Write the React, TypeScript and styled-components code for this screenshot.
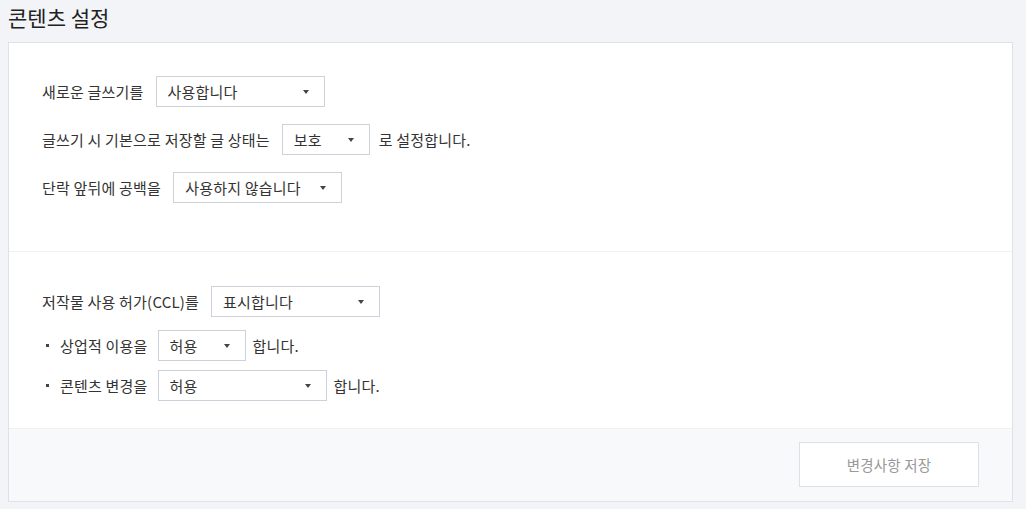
import React from "react";
import styled, { createGlobalStyle } from "styled-components";

const GlobalStyle = createGlobalStyle`
  html, body {
    margin: 0;
    padding: 0;
    background: #f3f4f7;
  }
  body {
    font-family: "Noto Sans CJK KR", "Noto Sans", sans-serif;
    color: #333;
    font-size: 15px;
    letter-spacing: 0.2px;
  }
`;

const Page = styled.div`
  padding: 0 13px 0 8px;
`;

const Title = styled.h2`
  margin: 0;
  height: 42px;
  font-size: 21px;
  font-weight: 400;
  line-height: 34px;
  letter-spacing: 0;
  color: #222;
`;

const Card = styled.div`
  background: #fff;
  border: 1px solid #dfe1ea;
  display: flex;
  flex-direction: column;
`;

const Section = styled.div<{ $top: number; $bottom: number }>`
  display: flex;
  flex-direction: column;
  padding: ${(p) => p.$top}px 33px ${(p) => p.$bottom}px 33px;
  & + & {
    border-top: 1px solid #eef0f3;
  }
`;

const Row = styled.div<{ $gap?: number }>`
  display: flex;
  align-items: center;
  height: 31px;
  gap: 12px;
  & + & {
    margin-top: ${(p) => p.$gap ?? 17}px;
  }
`;

const List = styled.ul`
  list-style: none;
  margin: 13px 0 0;
  padding: 0;
  display: flex;
  flex-direction: column;
  gap: 9px;
`;

const Item = styled.li`
  display: flex;
  align-items: center;
  height: 31px;
  gap: 10px;
  padding-left: 4px;
  &::before {
    content: "";
    width: 3px;
    height: 3px;
    background: #444;
    margin-right: 1px;
  }
`;

const Label = styled.span<{ $after?: boolean }>`
  white-space: nowrap;
  line-height: 20px;
  margin-left: ${(p) => (p.$after ? -3 : 0)}px;
`;

const Select = styled.div<{ $width: number }>`
  box-sizing: border-box;
  width: ${(p) => p.$width}px;
  height: 100%;
  border: 1px solid #cdd1d9;
  background: #fff;
  display: flex;
  align-items: center;
  justify-content: space-between;
  padding: 0 15px 0 11px;
  color: #333;
  cursor: pointer;
`;

const Caret = styled.span`
  width: 0;
  height: 0;
  border-left: 3.5px solid transparent;
  border-right: 3.5px solid transparent;
  border-top: 4px solid #444;
`;

const Footer = styled.div`
  border-top: 1px solid #eef0f3;
  background: #f8f9fb;
  display: flex;
  justify-content: flex-end;
  padding: 13px 33px 14px;
`;

const SaveButton = styled.button`
  width: 180px;
  height: 45px;
  border: 1px solid #dde0e7;
  background: #fff;
  color: #999;
  font-family: inherit;
  font-size: 14.5px;
  letter-spacing: 0.2px;
`;

const Dropdown = ({ value, width }: { value: string; width: number }) => (
  <Select $width={width}>
    <span>{value}</span>
    <Caret />
  </Select>
);

export default function App() {
  return (
    <>
      <GlobalStyle />
      <Page>
        <Title>콘텐츠 설정</Title>
        <Card>
          <Section $top={33} $bottom={48}>
            <Row>
              <Label>새로운 글쓰기를</Label>
              <Dropdown value="사용합니다" width={169} />
            </Row>
            <Row>
              <Label>글쓰기 시 기본으로 저장할 글 상태는</Label>
              <Dropdown value="보호" width={88} />
              <Label $after>로 설정합니다.</Label>
            </Row>
            <Row>
              <Label>단락 앞뒤에 공백을</Label>
              <Dropdown value="사용하지 않습니다" width={169} />
            </Row>
          </Section>
          <Section $top={34} $bottom={27}>
            <Row>
              <Label>저작물 사용 허가(CCL)를</Label>
              <Dropdown value="표시합니다" width={169} />
            </Row>
            <List>
              <Item>
                <Label>상업적 이용을</Label>
                <Dropdown value="허용" width={88} />
                <Label $after>합니다.</Label>
              </Item>
              <Item>
                <Label>콘텐츠 변경을</Label>
                <Dropdown value="허용" width={169} />
                <Label $after>합니다.</Label>
              </Item>
            </List>
          </Section>
          <Footer>
            <SaveButton>변경사항 저장</SaveButton>
          </Footer>
        </Card>
      </Page>
    </>
  );
}
